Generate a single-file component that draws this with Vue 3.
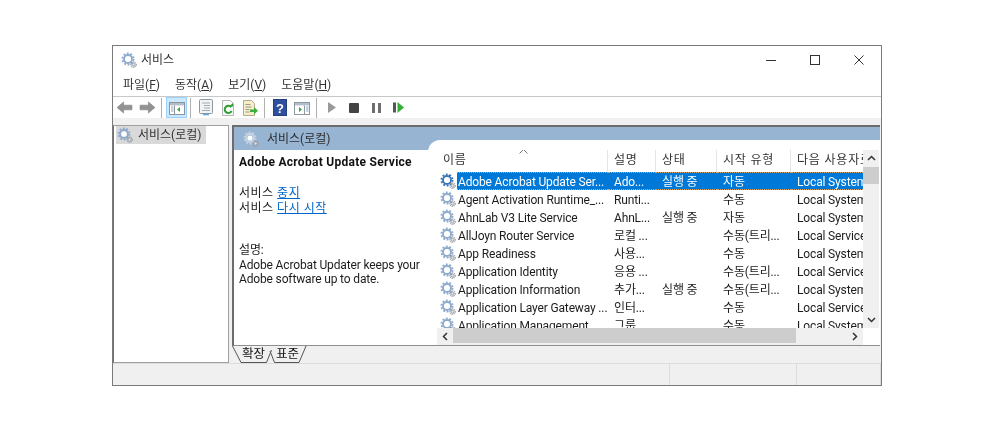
<script setup>
const menus = [
  { label: '파일', key: 'F' },
  { label: '동작', key: 'A' },
  { label: '보기', key: 'V' },
  { label: '도움말', key: 'H' },
]
const columns = ['이름', '설명', '상태', '시작 유형', '다음 사용자로 로그온']
const rows = [
  ['Adobe Acrobat Update Ser...', 'Ado...', '실행 중', '자동', 'Local System'],
  ['Agent Activation Runtime_...', 'Runti...', '', '수동', 'Local System'],
  ['AhnLab V3 Lite Service', 'AhnL...', '실행 중', '자동', 'Local System'],
  ['AllJoyn Router Service', '로컬 ...', '', '수동(트리...', 'Local Service'],
  ['App Readiness', '사용...', '', '수동', 'Local System'],
  ['Application Identity', '응용 ...', '', '수동(트리...', 'Local Service'],
  ['Application Information', '추가...', '실행 중', '수동(트리...', 'Local System'],
  ['Application Layer Gateway ...', '인터...', '', '수동', 'Local Service'],
  ['Application Management', '그룹...', '', '수동', 'Local System'],
]
</script>

<template>
  <div class="page">
    <svg class="defs" width="0" height="0" aria-hidden="true">
      <symbol id="gear" viewBox="0 0 16 16">
        <circle cx="7" cy="7" r="5.600" fill="none" stroke="currentColor" stroke-width="1.800" stroke-dasharray="1.900 1.600" />
        <circle cx="7" cy="7" r="4" fill="none" stroke="currentColor" stroke-width="1.900" />
        <circle cx="7" cy="7" r="2.600" fill="#fff" />
        <circle cx="12.600" cy="12.600" r="2.700" fill="none" stroke="#9a9ea4" stroke-width="1.200" stroke-dasharray="1.200 .8" />
        <circle cx="12.600" cy="12.600" r="1.600" fill="#e2e4e8" stroke="#8d9298" stroke-width=".8" />
      </symbol>
    </svg>

    <div class="window">
      <header class="titlebar">
        <svg class="ico16 gear-soft"><use href="#gear" /></svg>
        <span class="title">서비스</span>
        <div class="controls">
          <span class="ctl">
            <svg width="12" height="12" viewBox="0 0 12 12"><path d="M1 6.500h10" stroke="#333" fill="none" /></svg>
          </span>
          <span class="ctl">
            <svg width="12" height="12" viewBox="0 0 12 12"><rect x="1.500" y="1.500" width="9" height="9" stroke="#333" fill="none" /></svg>
          </span>
          <span class="ctl">
            <svg width="12" height="12" viewBox="0 0 12 12"><path d="M1.500 1.500l9 9M10.500 1.500l-9 9" stroke="#333" fill="none" /></svg>
          </span>
        </div>
      </header>

      <nav class="menubar">
        <span v-for="m in menus" :key="m.key" class="menu">{{ m.label }}(<u>{{ m.key }}</u>)</span>
      </nav>

      <div class="toolbar">
        <span class="btn back">
          <svg width="17" height="13" viewBox="0 0 18 14"><path d="M1 7l7-6v3.500h9v5H8V13z" fill="#929292" stroke="#7c7c7c" stroke-width=".6" /></svg>
        </span>
        <span class="btn">
          <svg width="17" height="13" viewBox="0 0 18 14"><path d="M17 7l-7-6v3.500H1v5h9V13z" fill="#929292" stroke="#7c7c7c" stroke-width=".6" /></svg>
        </span>
        <span class="sep"></span>
        <span class="btn active">
          <svg width="16" height="16" viewBox="0 0 16 16">
            <rect x=".5" y="2.500" width="15" height="12" fill="#fff" stroke="#8a95a0" />
            <rect x="1" y="3" width="14" height="2.400" fill="#b4bec8" />
            <path d="M5.500 5.500v9" stroke="#8a95a0" />
            <path d="M2 7h2.500M2 9h2.500M2 11h2.500" stroke="#9aa5b0" />
            <path d="M11 7v5L8 9.500z" fill="#3aa53a" />
          </svg>
        </span>
        <span class="sep"></span>
        <span class="btn">
          <svg width="16" height="17" viewBox="0 0 16 17">
            <rect x="1.500" y=".5" width="13" height="14" rx="1" fill="#f3f3f3" stroke="#8f979f" />
            <path d="M4 4h8M6 6.500h6M6 9h6M4 11.500h8" stroke="#a0abb6" />
            <path d="M5 15.500h6" stroke="#5aa9de" stroke-width="1.600" />
          </svg>
        </span>
        <span class="btn">
          <svg width="14" height="16" viewBox="0 0 14 16">
            <path d="M1.500 .5h8l3 3v12h-11z" fill="#fafafa" stroke="#b5b5b5" />
            <path d="M10.200 7.200A3.600 3.600 0 1 0 10.600 11" fill="none" stroke="#2f9e36" stroke-width="2" />
            <path d="M8 6.600h4V3z" fill="#2f9e36" />
          </svg>
        </span>
        <span class="btn">
          <svg width="16" height="16" viewBox="0 0 16 16">
            <path d="M1.500 .5h8l3 3v12h-11z" fill="#f6edc9" stroke="#b5ab8c" />
            <path d="M3.500 4.500h5M3.500 7h6M3.500 9.500h4M3.500 12h4" stroke="#9b9a90" />
            <path d="M8 9.500h4V7l4 3.800-4 3.800v-2.600H8z" fill="#3fae3f" />
          </svg>
        </span>
        <span class="sep"></span>
        <span class="btn">
          <svg width="14" height="17" viewBox="0 0 14 17">
            <rect x=".5" y=".5" width="13" height="16" fill="#2d4f9e" stroke="#24407f" />
            <text x="7" y="13.500" class="help-mark">?</text>
          </svg>
        </span>
        <span class="btn">
          <svg width="16" height="16" viewBox="0 0 16 16">
            <rect x=".5" y="2.500" width="15" height="12" fill="#fff" stroke="#8f979f" />
            <rect x="1" y="3" width="14" height="2.400" fill="#b4bec8" />
            <path d="M10.500 5.500v9" stroke="#8f979f" />
            <path d="M12 7h2.500M12 9h2.500M12 11h2.500" stroke="#7da7d0" />
            <path d="M5 7v5l3-2.500z" fill="#3aa53a" />
          </svg>
        </span>
        <span class="sep"></span>
        <span class="btn">
          <svg width="8" height="11" viewBox="0 0 8 11"><path d="M0 0l8 5.500-8 5.500z" fill="#9a9a9a" /></svg>
        </span>
        <span class="btn">
          <svg width="10" height="10" viewBox="0 0 10 10"><rect width="10" height="10" rx="1" fill="#444" /></svg>
        </span>
        <span class="btn">
          <svg width="9" height="10" viewBox="0 0 9 10"><path d="M0 0h3v10H0zM6 0h3v10H6z" fill="#6e6e6e" /></svg>
        </span>
        <span class="btn">
          <svg width="11" height="11" viewBox="0 0 11 11"><path d="M0 .5h3v10H0z" fill="#555" /><path d="M4.500 0L11 5.500 4.500 11z" fill="#35b035" /></svg>
        </span>
      </div>

      <main class="main">
        <aside class="tree">
          <div class="tree-item">
            <svg class="ico16 gear-soft"><use href="#gear" /></svg>
            <span>서비스(로컬)</span>
          </div>
        </aside>

        <section class="right">
          <div class="panel">
            <div class="side">
              <div class="band">
                <svg class="ico16 gear-band"><use href="#gear" /></svg>
                <span>서비스(로컬)</span>
              </div>
              <div class="detail">
                <h1 class="svc-name">Adobe Acrobat Update Service</h1>
                <p class="actions">서비스 <a>중지</a><br />서비스 <a>다시 시작</a></p>
                <p class="desc">설명:<br />Adobe Acrobat Updater keeps your<br />Adobe software up to date.</p>
              </div>
            </div>

            <div class="list">
              <div class="list-top">
                <div class="table">
                  <div class="thead">
                    <span v-for="c in columns" :key="c" class="th">{{ c }}</span>
                    <svg class="sort" width="9" height="5" viewBox="0 0 9 5"><path d="M.5 4.500l4-4 4 4" fill="none" stroke="#777" /></svg>
                  </div>
                  <div class="tbody">
                    <div v-for="(r, i) in rows" :key="r[0]" class="tr" :class="{ sel: i === 0 }">
                      <span class="td name">
                        <svg class="ico16" :class="i === 0 ? 'gear-strong' : 'gear-soft'"><use href="#gear" /></svg>
                        <span class="name-text">{{ r[0] }}</span>
                      </span>
                      <span v-for="(v, j) in r.slice(1)" :key="j" class="td cell">{{ v }}</span>
                    </div>
                  </div>
                </div>
                <div class="vscroll">
                  <svg width="9" height="6" viewBox="0 0 9 6"><path d="M1 5l3.500-3.500L8 5" fill="none" stroke="#333" stroke-width="1.500" /></svg>
                  <span class="vthumb"></span>
                  <span class="spacer"></span>
                  <svg width="9" height="6" viewBox="0 0 9 6"><path d="M1 1l3.500 3.500L8 1" fill="none" stroke="#333" stroke-width="1.500" /></svg>
                </div>
              </div>
              <div class="hscroll">
                <span class="harrow">
                  <svg width="6" height="9" viewBox="0 0 6 9"><path d="M5 1L1.500 4.500 5 8" fill="none" stroke="#333" stroke-width="1.500" /></svg>
                </span>
                <span class="hthumb"></span>
                <span class="spacer"></span>
                <span class="harrow">
                  <svg width="6" height="9" viewBox="0 0 6 9"><path d="M1 1l3.500 3.500L1 8" fill="none" stroke="#333" stroke-width="1.500" /></svg>
                </span>
                <span class="corner"></span>
              </div>
            </div>
          </div>

          <div class="tabs">
            <svg class="tab-lines" width="80" height="18" viewBox="0 0 80 18">
              <path d="M.5 0L9 16.500h25.500L39.500 4" fill="none" stroke="#555" />
              <path d="M38 5l4.500 11.500H67L74 0" fill="none" stroke="#555" />
            </svg>
            <span class="tab first">확장</span>
            <span class="tab">표준</span>
          </div>
        </section>
      </main>

      <footer class="status">
        <span class="st st1"></span>
        <span class="st st2"></span>
        <span class="st st3"></span>
      </footer>
    </div>
  </div>
</template>

<style scoped>
.page {
  padding: 45px 0 0 112px;
  width: 986px;
  height: 423px;
  box-sizing: border-box;
  background: #fff;
  font: 12px/18px Roboto, "Noto Sans CJK KR", sans-serif;
  color: #1c1c1c;
  overflow: hidden;
  filter: blur(0.35px);
}
.defs { position: absolute; }
.window {
  width: 770px;
  height: 341px;
  box-sizing: border-box;
  border: 1px solid #7a7a7a;
  display: flex;
  flex-direction: column;
  background: #fff;
}
.ico16 { width: 16px; height: 16px; flex: none; display: block; }
.gear-soft { color: #8eabcd; }
.gear-strong { color: #3c77b8; }
.gear-band { color: #c3d3e6; }

.titlebar {
  height: 27px;
  flex: none;
  display: flex;
  align-items: center;
  padding-left: 8px;
}
.title { margin-left: 4px; color: #333; }
.controls { margin-left: auto; display: flex; }
.ctl { width: 44px; height: 27px; display: flex; align-items: center; justify-content: center; }

.menubar {
  height: 23px;
  flex: none;
  display: flex;
  align-items: center;
  padding-left: 10px;
  gap: 15px;
  color: #333;
}
.menu { white-space: nowrap; }

.toolbar {
  height: 21px;
  flex: none;
  border-top: 1px solid #c8c8c8;
  display: flex;
  align-items: center;
  padding-left: 1px;
}
.btn { width: 22px; height: 21px; display: flex; align-items: center; justify-content: center; flex: none; box-sizing: border-box; }
.btn.back { margin-left: -1px; margin-right: 1px; }
.btn.active { width: 21px; background: #cce8ff; border: 1px solid #99d1ff; }
.sep { width: 1px; height: 20px; background: #b0b0b0; margin: 0 4px 0 3px; flex: none; }
.help-mark { font: bold 13px "Liberation Sans", sans-serif; fill: #fff; text-anchor: middle; }

.main {
  flex: 1;
  min-height: 0;
  background: #f0f0f0;
  padding-top: 7px;
  display: flex;
  gap: 3px;
}
.tree {
  width: 116px;
  flex: none;
  box-sizing: border-box;
  background: #fff;
  border: 1px solid #a0a0a0;
  border-left-color: #6f6f6f;
  padding: 0 0 0 2px;
}
.tree-item {
  width: 90px;
  height: 18px;
  background: #d9d9d9;
  display: flex;
  align-items: center;
  gap: 5px;
  padding-left: 1px;
  white-space: nowrap;
  box-sizing: border-box;
  color: #333;
}

.right { flex: 1; min-width: 0; display: flex; flex-direction: column; margin-right: 1px; }
.panel {
  flex: 1;
  min-height: 0;
  display: flex;
  background: #98b4d3;
  border: solid #6d6d6d;
  border-width: 2px 0 1px 2px;
  border-bottom-color: #8f8f8f;
}
.side { width: 194px; flex: none; display: flex; flex-direction: column; }
.band {
  height: 23px;
  flex: none;
  display: flex;
  align-items: center;
  gap: 8px;
  padding-left: 9px;
  color: #2c2c2c;
}
.detail { flex: 1; background: #fff; padding: 3px 0 0 5px; line-height: 14.500px; }
.svc-name { margin: 0; font-size: 12px; font-weight: 700; line-height: 18px; color: #111; white-space: nowrap; letter-spacing: .28px; }
.actions { margin: 15px 0 0; letter-spacing: .5px; }
.actions a { color: #0066cc; text-decoration: underline; }
.desc { margin: 28px 0 0; white-space: nowrap; letter-spacing: -.15px; }

.list {
  flex: 1;
  min-width: 0;
  margin-top: 13px;
  background: #fff;
  border-top-left-radius: 12px;
  padding: 10px 0 0 9px;
  display: flex;
  flex-direction: column;
}
.list-top { flex: 1; min-height: 0; display: flex; }
.table { width: 426px; flex: none; display: flex; flex-direction: column; overflow: hidden; }
.thead, .tr { display: grid; grid-template-columns: 171px 48px 61px 74px 72px; }
.thead { height: 22px; flex: none; position: relative; }
.th {
  padding-left: 6px;
  border-right: 1px solid #e5e5e5;
  line-height: 21px;
  white-space: nowrap;
  overflow: hidden;
  color: #333;
  letter-spacing: .8px;
}
.th:last-of-type { border-right: 0; }
.sort { position: absolute; left: 82px; top: -1px; }
.tbody { flex: 1; min-height: 0; overflow: hidden; }
.tr { height: 18px; }
.td { white-space: nowrap; overflow: hidden; line-height: 20px; box-sizing: border-box; letter-spacing: -.15px; }
.cell { padding-left: 6px; }
.name { display: flex; align-items: center; padding-left: 3px; gap: 1px; }
.name-text { flex: 1; padding-left: 1px; height: 18px; box-sizing: border-box; }
.sel .name-text, .sel .cell {
  background: #0078d7;
  color: #fff;
  border-block: 1px dotted #d8a566;
  line-height: 18px;
}

.vscroll {
  width: 16px;
  flex: none;
  background: #f0f0f0;
  display: flex;
  flex-direction: column;
  align-items: center;
  padding-top: 5px;
  padding-bottom: 5px;
  box-sizing: border-box;
}
.vthumb { width: 16px; height: 17px; background: #cdcdcd; flex: none; margin-top: 6px; }
.spacer { flex: 1; }

.hscroll { height: 17px; flex: none; display: flex; align-items: center; background: #f0f0f0; }
.harrow { width: 16px; height: 17px; display: flex; align-items: center; justify-content: center; flex: none; }
.hthumb { width: 343px; height: 15px; background: #cdcdcd; flex: none; margin-bottom: 2px; }
.corner { width: 17px; height: 17px; background: #fff; flex: none; }

.tabs {
  height: 17px;
  flex: none;
  position: relative;
  display: flex;
  padding-left: 10px;
  font-size: 12.500px;
  line-height: 16px;
  color: #111;
}
.tab-lines { position: absolute; left: 0; top: 0; }
.tab { width: 23px; white-space: nowrap; }
.tab.first { margin-right: 11px; }

.status {
  height: 21px;
  flex: none;
  background: #f0f0f0;
  border-top: 1px solid #dcdcdc;
  display: flex;
}
.st { border-right: 1px solid #dcdcdc; flex: none; }
.st1 { width: 556px; }
.st2 { width: 126px; }
.st3 { width: 83px; }
</style>
